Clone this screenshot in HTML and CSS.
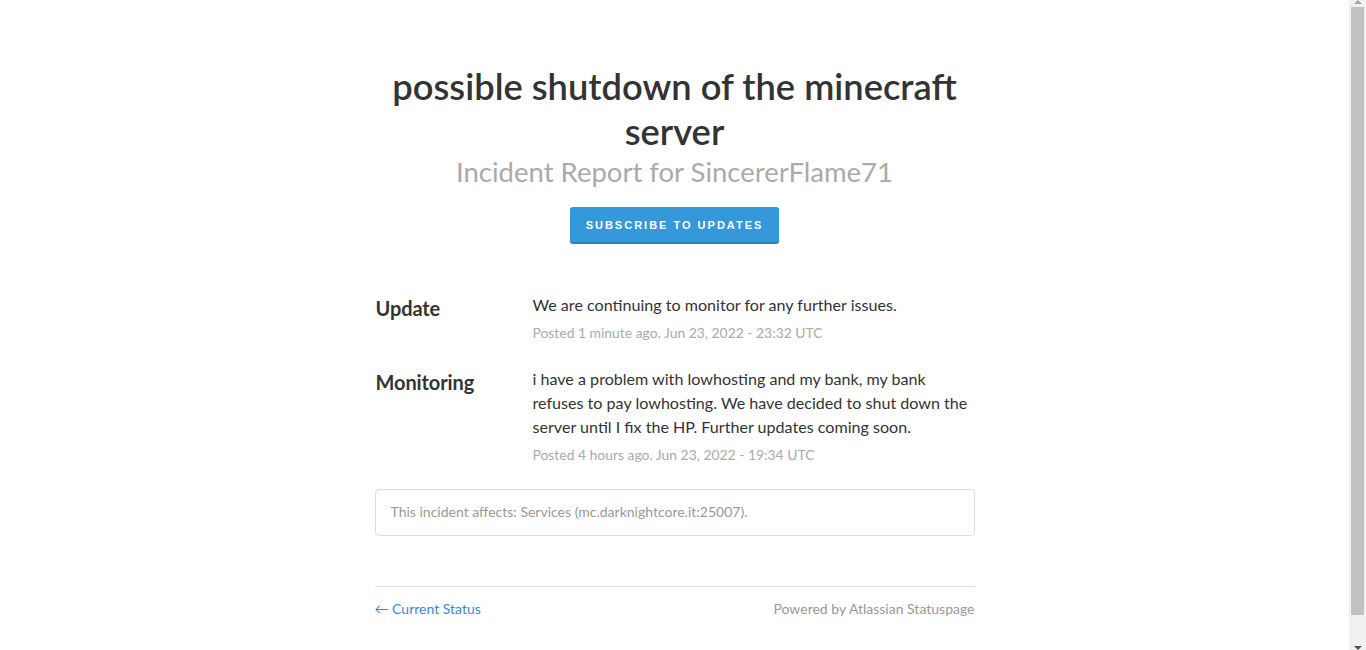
FILE: index.html
```html
<!DOCTYPE html>
<html lang="en">
<head>
<meta charset="utf-8">
<title>possible shutdown of the minecraft server</title>
<link rel="stylesheet" href="styles.css">
</head>
<body>
<div class="page">
  <header class="header">
    <h1 class="title">possible shutdown of the minecraft server</h1>
    <div class="subtitle">Incident Report for SincererFlame71</div>
    <button class="subscribe">SUBSCRIBE TO UPDATES</button>
  </header>

  <div class="updates">
    <div class="row">
      <div class="label">Update</div>
      <div class="content">
        <div class="body">We are continuing to monitor for any further issues.</div>
        <div class="meta">Posted 1 minute ago. Jun 23, 2022 - 23:32 UTC</div>
      </div>
    </div>
    <div class="row">
      <div class="label">Monitoring</div>
      <div class="content">
        <div class="body">i have a problem with lowhosting and my bank, my bank refuses to pay lowhosting. We have decided to shut down the server until I fix the HP. Further updates coming soon.</div>
        <div class="meta">Posted 4 hours ago. Jun 23, 2022 - 19:34 UTC</div>
      </div>
    </div>
  </div>

  <div class="affects">This incident affects: Services (mc.darknightcore.it:25007).</div>

  <footer class="footer">
    <a class="back" href="#">&larr; Current Status</a>
    <a class="powered" href="#">Powered by Atlassian Statuspage</a>
  </footer>
</div>

<div class="scrollbar" aria-hidden="true">
  <div class="arrow arrow-up"></div>
  <div class="thumb"></div>
  <div class="track-rest"></div>
  <div class="arrow arrow-down"></div>
</div>
</body>
</html>
```

FILE: styles.css
```css
html, body {
  margin: 0;
  padding: 0;
  background: #ffffff;
}
body {
  font-family: "Lato", "Open Sans", sans-serif;
  color: #333333;
  padding-right: 17px;
}
.page {
  width: 600px;
  margin: 0 auto;
  padding: 64px 0 40px;
}
.header {
  display: flex;
  flex-direction: column;
  align-items: center;
  text-align: center;
}
.title {
  margin: 0;
  font-size: 36.3px;
  line-height: 45px;
  font-weight: 600;
  color: #333333;
  padding: 0 10px;
}
.subtitle {
  margin-top: 1px;
  font-size: 27.5px;
  line-height: 34px;
  color: #aaaaaa;
}
.subscribe {
  margin-top: 18px;
  background: #3498db;
  border: none;
  border-bottom: 2px solid #2a7fc0;
  border-radius: 3px;
  color: #ffffff;
  font-family: "Liberation Sans", sans-serif;
  font-weight: 700;
  font-size: 11px;
  letter-spacing: 2px;
  padding: 0 12px;
  height: 37px;
  width: 209px;
}
.updates {
  margin-top: 49px;
}
.row {
  display: flex;
  margin-bottom: 23px;
}
.label {
  width: 157px;
  flex: none;
  font-size: 20px;
  font-weight: 700;
  line-height: 24px;
  padding-top: 3px;
  padding-left: 1px;
  letter-spacing: -0.1px;
}
.content {
  flex: 1;
}
.body {
  font-size: 16.1px;
  line-height: 24px;
  color: #333333;
}
.meta {
  margin-top: 5px;
  font-size: 13.9px;
  line-height: 22px;
  color: #aaaaaa;
}
.affects {
  margin-top: 0;
  border: 1px solid #dddddd;
  border-radius: 4px;
  padding: 12px 15px 13px;
  font-size: 14px;
  line-height: 20px;
  color: #999999;
}
.footer {
  margin-top: 50px;
  border-top: 1px solid #dddddd;
  padding-top: 13px;
  display: flex;
  justify-content: space-between;
  font-size: 14px;
  line-height: 18px;
}
.footer a {
  text-decoration: none;
}
.back {
  color: #3a8ad1;
}
.powered {
  color: #999999;
}

/* faux browser scrollbar drawn over the right edge of the viewport */
.scrollbar {
  position: fixed;
  top: 0;
  right: 0;
  width: 17px;
  height: 100vh;
  background: #f1f1f1;
  display: flex;
  flex-direction: column;
  align-items: center;
}
.arrow {
  flex: none;
  width: 0;
  height: 0;
  border-left: 4px solid transparent;
  border-right: 4px solid transparent;
}
.arrow-up {
  border-bottom: 4px solid #a3a3a3;
  margin: 0 0 3px;
}
.thumb {
  flex: none;
  width: 13px;
  height: 608px;
  background: #c1c1c1;
}
.track-rest {
  flex: 1;
}
.arrow-down {
  border-top: 4px solid #505050;
  margin: 0 0 0;
}
```
